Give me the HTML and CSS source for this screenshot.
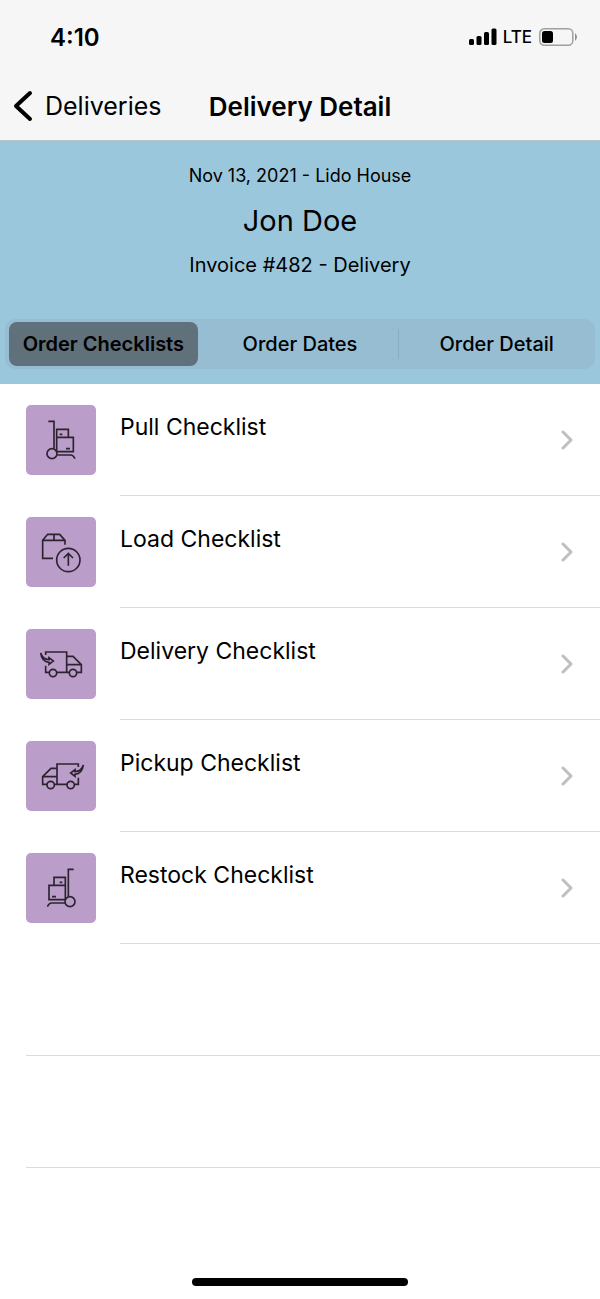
FILE: index.html
```html
<!DOCTYPE html>
<html lang="en">

<head>
    <meta charset="utf-8">
    <meta name="viewport" content="width=device-width, initial-scale=1">
    <title>Delivery Detail</title>
    <link rel="stylesheet" href="styles.css">
</head>

<body>
    <header class="top">
        <div class="status">
            <span class="time">4:10</span>
            <div class="signal">
                <svg width="28" height="18" viewBox="0 0 28 18" aria-hidden="true">
                    <rect x="0" y="11" width="5" height="6" rx="1.5" />
                    <rect x="7.5" y="8" width="5" height="9" rx="1.5" />
                    <rect x="15" y="4" width="5" height="13" rx="1.5" />
                    <rect x="22.5" y="0.5" width="5" height="16.5" rx="1.5" />
                </svg>
                <span class="network">LTE</span>
                <svg width="40" height="18" viewBox="0 0 40 18" aria-hidden="true">
                    <rect x="1.8" y="0.8" width="33" height="16.4" rx="4.5" fill="none" stroke="#a0a0a0" stroke-width="1.5" />
                    <rect x="4" y="3" width="11" height="12" rx="2.5" />
                    <path d="M37 5 Q41 9 37 13 Z" fill="#909090" />
                </svg>
            </div>
        </div>
        <nav class="navbar">
            <a class="back" href="#">
                <svg width="20" height="32" viewBox="0 0 20 32" aria-hidden="true">
                    <path d="M17 3 L3 16 L17 29" fill="none" stroke="#000" stroke-width="4" stroke-linecap="round" stroke-linejoin="round" />
                </svg>
                Deliveries
            </a>
            <h1>Delivery Detail</h1>
        </nav>
    </header>

    <section class="summary">
        <p class="event">Nov 13, 2021 - Lido House</p>
        <h2>Jon Doe</h2>
        <p class="invoice">Invoice #482 - Delivery</p>
        <div class="tabs" role="tablist">
            <button type="button" class="tab active" role="tab" aria-selected="true">Order Checklists</button>
            <button type="button" class="tab" role="tab" aria-selected="false">Order Dates</button>
            <button type="button" class="tab" role="tab" aria-selected="false">Order Detail</button>
        </div>
    </section>

    <ul class="list">
        <li>
            <a class="row" href="#">
                <svg class="tile" viewBox="17 15 210 210" aria-hidden="true">
                    <path d="M84 64 H101 V146 M109 112 V88 H144 V112 M109 112 H159 V155 H109 V88 M118 103 H126 M137 146 H149 M111 165 H152 Q158 165 164 176" />
                    <circle cx="95" cy="161" r="15" />
                </svg>
                <div class="label">
                    <span>Pull Checklist</span>
                    <svg class="chevron" viewBox="0 0 12 20" aria-hidden="true"><path d="M2 2 L10 10 L2 18" /></svg>
                </div>
            </a>
        </li>
        <li>
            <a class="row" href="#">
                <svg class="tile" viewBox="17 15 210 210" aria-hidden="true">
                    <path d="M98 139 H67 V85 L82 67 H118 L134 85 V98 M67 85 H134 M101 67 V85" />
                    <circle cx="144" cy="144" r="35" />
                    <path d="M144 161 V125 M130 138 L144 124 L158 138" />
                </svg>
                <div class="label">
                    <span>Load Checklist</span>
                    <svg class="chevron" viewBox="0 0 12 20" aria-hidden="true"><path d="M2 2 L10 10 L2 18" /></svg>
                </div>
            </a>
        </li>
        <li>
            <a class="row" href="#">
                <svg class="tile" viewBox="17 15 210 210" aria-hidden="true">
                    <path d="M76 93 V84 H139 V145 M139 97 H158 L183 122 V145 H170 M139 122 H183 M76 125 V145 H86 M110 145 H147" />
                    <circle cx="98" cy="147" r="11" />
                    <circle cx="158" cy="147" r="11" />
                    <path d="M61 87 Q67 106 86 107 V101 L99 111 L86 121 V115 Q64 113 61 87 Z" />
                </svg>
                <div class="label">
                    <span>Delivery Checklist</span>
                    <svg class="chevron" viewBox="0 0 12 20" aria-hidden="true"><path d="M2 2 L10 10 L2 18" /></svg>
                </div>
            </a>
        </li>
        <li>
            <a class="row" href="#">
                <svg class="tile" viewBox="17 15 210 210" aria-hidden="true">
                    <path d="M174 93 V84 H110 V145 M110 97 H92 L67 122 V145 H80 M110 122 H67 M174 125 V145 H164 M140 145 H103" />
                    <circle cx="91" cy="147" r="11" />
                    <circle cx="151" cy="147" r="11" />
                    <path d="M189 87 Q183 106 164 107 V101 L151 111 L164 121 V115 Q186 113 189 87 Z" />
                </svg>
                <div class="label">
                    <span>Pickup Checklist</span>
                    <svg class="chevron" viewBox="0 0 12 20" aria-hidden="true"><path d="M2 2 L10 10 L2 18" /></svg>
                </div>
            </a>
        </li>
        <li>
            <a class="row" href="#">
                <svg class="tile" viewBox="17 15 210 210" aria-hidden="true">
                    <path d="M160 64 H144 V146 M101 112 V88 H135 V155 M135 112 H86 V155 H135 M118 103 H126 M95 146 H107 M134 165 H93 Q87 165 81 176" />
                    <circle cx="149" cy="161" r="15" />
                </svg>
                <div class="label">
                    <span>Restock Checklist</span>
                    <svg class="chevron" viewBox="0 0 12 20" aria-hidden="true"><path d="M2 2 L10 10 L2 18" /></svg>
                </div>
            </a>
        </li>
        <li class="empty"></li>
        <li class="empty"></li>
    </ul>

    <div class="home-bar"></div>
</body>

</html>
```
FILE: styles.css
```css
* {
    box-sizing: border-box;
}

body {
    margin: 0;
    min-height: 100vh;
    display: flex;
    flex-direction: column;
    font-family: Inter, "Liberation Sans", sans-serif;
    color: #000;
    background-color: #fff;
}

h1,
h2,
p {
    margin: 0;
}

a {
    color: inherit;
    text-decoration: none;
}

.top {
    background-color: #f6f6f6;
    border-bottom: 1px solid #b5c3ca;
}

.status {
    display: flex;
    justify-content: space-between;
    align-items: center;
    height: 72px;
    padding: 2px 22px 0 50px;
}

.time {
    font-size: 24px;
    font-weight: 600;
}

.signal {
    display: flex;
    align-items: center;
    gap: 6px;
}

.network {
    font-size: 17px;
    font-weight: 500;
}

.navbar {
    display: grid;
    grid-template-columns: 1fr auto 1fr;
    align-items: center;
    height: 68px;
    padding: 0 13px;
}

.back {
    display: flex;
    align-items: center;
    gap: 12px;
    font-size: 25px;
}

h1 {
    font-size: 26px;
    font-weight: 600;
}

.summary {
    background-color: #9bc7dd;
    padding: 23px 5px 15px;
    text-align: center;
}

.event {
    font-size: 18px;
    line-height: 24px;
}

h2 {
    font-size: 29px;
    font-weight: 400;
    line-height: 40px;
    margin: 13px 0 12px;
}

.invoice {
    font-size: 20px;
    line-height: 24px;
}

.tabs {
    display: grid;
    grid-template-columns: repeat(3, 1fr);
    margin-top: 42px;
    padding: 3px 0;
    height: 50px;
    border-radius: 10px;
    background-color: #96bdd1;
}

.tab {
    margin: 0 4px;
    padding: 0;
    border: none;
    border-radius: 8px;
    background: none;
    font-family: inherit;
    font-size: 20px;
    font-weight: 500;
    color: #000;
    cursor: pointer;
}

.tab.active {
    background-color: #60717c;
    font-weight: 600;
}

.tab:last-child {
    margin: 0;
    border-radius: 0;
    background: linear-gradient(#87adc0, #87adc0) left center / 1px 30px no-repeat;
}

.list {
    list-style: none;
    margin: 0;
    padding: 0 0 0 26px;
}

.row {
    display: flex;
    align-items: center;
    gap: 24px;
    height: 112px;
}

.tile {
    width: 70px;
    height: 70px;
    border-radius: 5px;
    background-color: #bb9dc9;
    fill: none;
    stroke: #2b2430;
    stroke-width: 5;
}

.label {
    flex: 1;
    display: flex;
    justify-content: space-between;
    align-items: center;
    height: 112px;
    padding-right: 27px;
    border-bottom: 1px solid #dcdcde;
    font-size: 23px;
}

.label span {
    align-self: flex-start;
    margin-top: 28px;
    line-height: 30px;
}

.chevron {
    width: 12px;
    height: 20px;
    fill: none;
    stroke: #bfbfc1;
    stroke-width: 3;
    stroke-linecap: round;
    stroke-linejoin: round;
}

.empty {
    height: 112px;
    border-bottom: 1px solid #dcdcde;
}

.home-bar {
    width: 36%;
    height: 8px;
    margin: auto auto 13px;
    border-radius: 4px;
    background-color: #000;
}
```
